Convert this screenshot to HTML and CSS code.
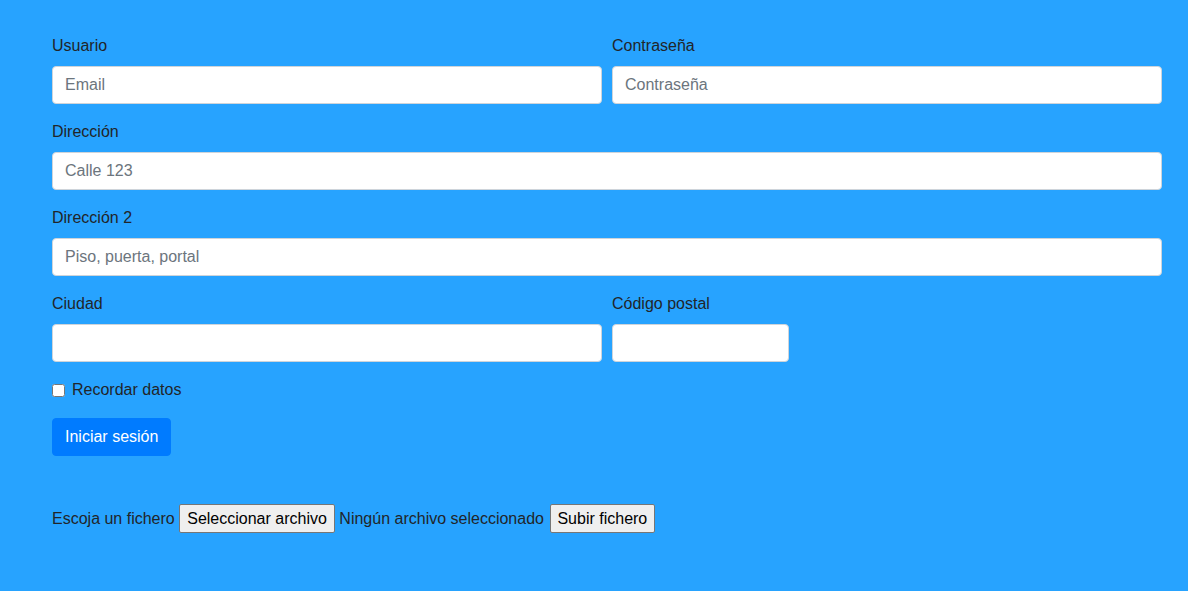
FILE: index.html
```html
<!DOCTYPE html>
<html lang="es">
<head>
<meta charset="utf-8">
<title>Formulario</title>
<link rel="stylesheet" href="styles.css">
</head>
<body>
<div class="container">
  <form class="form">
    <div class="row">
      <div class="group col-6">
        <label class="label" for="email">Usuario</label>
        <input class="input" id="email" type="email" placeholder="Email">
      </div>
      <div class="group col-6">
        <label class="label" for="pass">Contraseña</label>
        <input class="input" id="pass" type="password" placeholder="Contraseña">
      </div>
    </div>
    <div class="group">
      <label class="label" for="addr">Dirección</label>
      <input class="input" id="addr" type="text" placeholder="Calle 123">
    </div>
    <div class="group">
      <label class="label" for="addr2">Dirección 2</label>
      <input class="input" id="addr2" type="text" placeholder="Piso, puerta, portal">
    </div>
    <div class="row">
      <div class="group col-6">
        <label class="label" for="city">Ciudad</label>
        <input class="input" id="city" type="text">
      </div>
      <div class="group col-2">
        <label class="label" for="zip">Código postal</label>
        <input class="input" id="zip" type="text">
      </div>
    </div>
    <div class="group">
      <label class="check"><input class="checkbox" type="checkbox"><span>Recordar datos</span></label>
    </div>
    <button class="btn-primary" type="button">Iniciar sesión</button>
  </form>
  <div class="upload">
    <span>Escoja un fichero</span>
    <button class="btn-native btn-file" type="button">Seleccionar archivo</button>
    <span>Ningún archivo seleccionado</span>
    <button class="btn-native btn-submit" type="button">Subir fichero</button>
  </div>
</div>
</body>
</html>
```

FILE: styles.css
```css
* { box-sizing: border-box; }
html, body { margin: 0; padding: 0; }
body {
  background: #27a3ff;
  font-family: "Liberation Sans", Arial, sans-serif;
  font-size: 16px;
  line-height: 1.5;
  color: #212529;
}
.container {
  width: 1110px;
  margin-left: 52px;
  padding-top: 34px;
}
.row {
  display: flex;
  gap: 10px;
}
.col-6 { width: 550px; }
.col-2 { width: 177px; }
.group {
  margin-bottom: 16px;
}
.label {
  display: block;
  margin-bottom: 8px;
  line-height: 24px;
}
.input {
  display: block;
  width: 100%;
  height: 38px;
  padding: 6px 12px;
  font: inherit;
  color: #495057;
  background: #fff;
  border: 1px solid #ced4da;
  border-radius: 4px;
}
.input::placeholder { color: #6c757d; }
.check {
  display: flex;
  align-items: center;
  height: 24px;
}
.checkbox {
  width: 13px;
  height: 13px;
  margin: 0 7px 0 0;
}
.btn-primary {
  display: block;
  height: 38px;
  padding: 6px 12px;
  font: inherit;
  color: #fff;
  background: #007bff;
  border: 1px solid #007bff;
  border-radius: 4px;
}
.upload {
  margin-top: 48px;
  display: flex;
  align-items: center;
  gap: 4px;
  line-height: 20px;
}
.btn-native {
  height: 29px;
  padding: 0 7px;
  font: inherit;
  color: #000;
  background: #efefef;
  border: 1px solid #767676;
  border-radius: 2px;
}
.btn-file { padding: 0 7.5px; }
.btn-submit { margin-left: 2px; padding: 0 6.5px; }
```
